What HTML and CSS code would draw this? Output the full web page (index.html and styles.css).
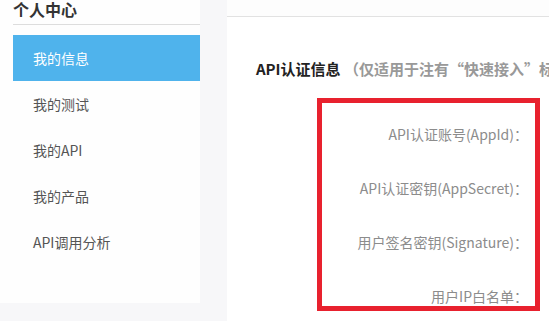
FILE: index.html
```html
<!DOCTYPE html>
<html>
<head>
    <meta charset="UTF-8">
    <title>个人中心 - 我的信息</title>
    <link rel="stylesheet" href="styles.css">
</head>
<body>
    <div class="page">
        <div class="sidebar">
            <div class="sidebar-title">个人中心</div>
            <ul class="menu">
                <li class="menu-item active">我的信息</li>
                <li class="menu-item">我的测试</li>
                <li class="menu-item">我的API</li>
                <li class="menu-item">我的产品</li>
                <li class="menu-item">API调用分析</li>
            </ul>
        </div>

        <div class="main">
            <div class="main-panel">
                <div class="section-title">
                    API认证信息 <span class="section-note">（仅适用于注有“快速接入”标签的API）</span>
                </div>
                <div class="auth-box">
                    <div class="auth-row">API认证账号(AppId)：</div>
                    <div class="auth-row">API认证密钥(AppSecret)：</div>
                    <div class="auth-row">用户签名密钥(Signature)：</div>
                    <div class="auth-row">用户IP白名单：</div>
                </div>
            </div>
        </div>
    </div>
</body>
</html>
```

FILE: styles.css
```css
body {
    font-family: "Noto Sans CJK SC", "Noto Sans", sans-serif;
    margin: 0;
    padding: 0;
    background-color: #f7f7f9;
    color: #555;
    overflow: hidden;
}
.page {
    display: flex;
    align-items: flex-start;
    gap: 27px;
    height: 321px;
}
.sidebar {
    flex-shrink: 0;
    width: 187px;
    height: 303px;
    padding-left: 13px;
    background-color: #fefefe;
}
.sidebar-title {
    font-size: 16px;
    font-weight: bold;
    color: #333;
    line-height: 18px;
    padding-bottom: 6px;
    border-bottom: 1px solid #ddd;
}
.menu {
    list-style: none;
    margin: 10px 0 0;
    padding: 0;
}
.menu-item {
    height: 46px;
    line-height: 46px;
    padding-left: 20px;
    font-size: 14px;
    color: #555;
}
.menu-item.active {
    background-color: #4fb3ec;
    color: #fff;
}
.main {
    flex: 1;
    min-width: 0;
    align-self: stretch;
    padding-top: 16px;
    background-color: #fdfdfd;
}
.main-panel {
    border-top: 1px solid #e2e2e2;
    background-color: #fff;
    height: 100%;
    padding-left: 29px;
    white-space: nowrap;
    overflow: hidden;
}
.section-title {
    margin-top: 42px;
    font-size: 15px;
    font-weight: bold;
    color: #222;
    line-height: 20px;
}
.section-note {
    color: #999;
}
.auth-box {
    box-sizing: border-box;
    margin-top: 19px;
    margin-left: 61px;
    width: 223px;
    border: 5px solid #e8212e;
    padding: 21px 7px 0 0;
    display: flex;
    flex-direction: column;
    align-items: flex-end;
    gap: 34px;
}
.auth-row {
    font-size: 14px;
    line-height: 20px;
    color: #8c8c8c;
}
```
